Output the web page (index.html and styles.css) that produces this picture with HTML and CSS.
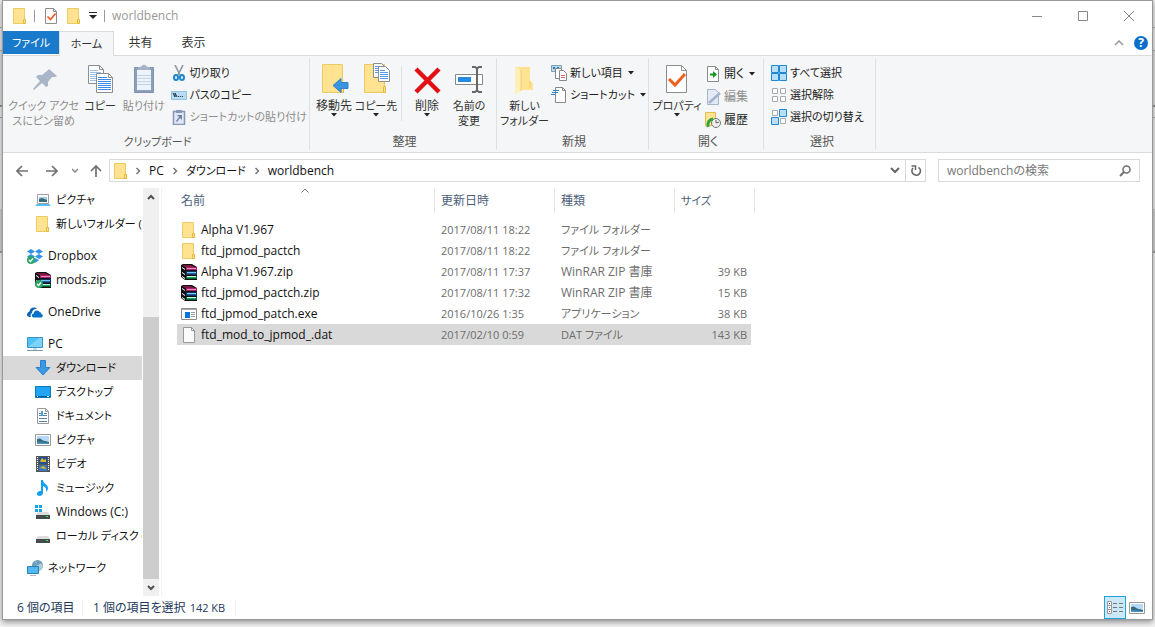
FILE: index.html
```html
<!DOCTYPE html>
<html lang="ja">
<head>
<meta charset="utf-8">
<title>worldbench</title>
<link rel="stylesheet" href="styles.css">
</head>
<body>
<svg class="defs" aria-hidden="true">
  <symbol id="i-folder" viewBox="0 0 16 16"><path d="M1.500.5h11v11h1v4h-12z" fill="#ffe391" stroke="#eecb60"/><path d="M11.500 15.500v-4h2v4z" fill="#ffe391" stroke="#e5b93c"/></symbol>
  <symbol id="i-checkdoc" viewBox="0 0 16 16"><path d="M2.500.5h8l3 3v12h-11z" fill="#fff" stroke="#8b8b8b"/><path d="M10.500.5v3h3" fill="none" stroke="#8b8b8b"/><path d="M4.500 8.500l3 3 5-6" fill="none" stroke="#ee5a24" stroke-width="1.700"/></symbol>
  <symbol id="i-file" viewBox="0 0 16 16"><path d="M2.500.5h8l3 3v12h-11z" fill="#fafafa" stroke="#999"/><path d="M10.500.5v3h3" fill="none" stroke="#999"/></symbol>
  <symbol id="i-rar" viewBox="0 0 16 16"><path d="M0 1l2-1h9l5 3v13H4l-4-3z" fill="#111"/><path d="M1 1h9l4 2H4z" fill="#7d1745"/><path d="M5 3h11v3H5z" fill="#a92268"/><path d="M6 4h9v1H6z" fill="#f08cc4"/><path d="M1 3l3 2v1L1 4zM1 8l3 2v1L1 9zM1 12l3 2v1l-3-2z" fill="#fff"/><path d="M5 7h11v4H5z" fill="#12335f"/><path d="M6 8h9v1H6z" fill="#73c9f3"/><path d="M6 9h9v1H6z" fill="#2062ac"/><path d="M5 12h11v3H5z" fill="#075e38"/><path d="M6 12h9v1H6z" fill="#c9ffe0"/><path d="M6 13h9v1H6z" fill="#19a760"/></symbol>
  <symbol id="i-exe" viewBox="0 0 16 16"><path d="M.5 2.500h15v11H.5z" fill="#fff" stroke="#8c8c8c"/><path d="M1 3h14v1H1z" fill="#aaa"/><path d="M4 6h5v6H4z" fill="#0078d7"/><path d="M10 6.500h4M10 8.500h4M10 10.500h4" stroke="#999"/></symbol>
  <symbol id="i-pic" viewBox="0 0 16 16"><path d="M.5 2.500h15v11H.5z" fill="#fff" stroke="#999"/><path d="M2 4h12v8H2z" fill="#b5daf8"/><path d="M2 7l3-.5 3 2 6 1.500v1H2z" fill="#376b7a"/><path d="M2 10l12 1v1H2z" fill="#4c92c6"/></symbol>
  <symbol id="i-piclink" viewBox="0 0 16 16"><path d="M2.500 2.500h11v9h-11z" fill="#fff" stroke="#a0a0a0"/><path d="M4 5h8v5H4z" fill="#a3cdec"/><path d="M4 7l3-1 5 2v2H4z" fill="#376b7a"/><path d="M2 12h12l2 2H0z" fill="#55bff4"/></symbol>
  <symbol id="i-ok" viewBox="0 0 16 16"><circle cx="4" cy="12" r="4" fill="#2ea568"/><path d="M2 12l1.500 1.500 2.500-3" fill="none" stroke="#fff" stroke-width="1.300"/></symbol>
  <symbol id="i-dropbox" viewBox="0 0 16 16"><path d="M4 1l4 2.500L4 6 0 3.500zM12 1l4 2.500L12 6 8 3.500zM4 6l4 2.500L4 11 0 8.500zM12 6l4 2.500-4 2.500-4-2.500zM8 10l4 2-4 3-4-3z" fill="#3193e5"/><use href="#i-ok"/></symbol>
  <symbol id="i-cloud" viewBox="0 0 16 16"><path d="M0 11c0-2 1-3 2.500-3.500C3 4 7 2 10 5 7 4.500 5 6.500 5 9c-2 1-1.500 3-1 4C2 13 0 12.500 0 11z" fill="#0d63b5"/><path d="M6.500 13.500c-2.500-.5-2-4 .2-4 0-3.500 5-4 6-1.200 1.300 0 1.700 1 1.500 1.700 2.300.5 2 3.500 0 3.500z" fill="#0872c9"/></symbol>
  <symbol id="i-pc" viewBox="0 0 16 16"><path d="M.5 1.500h15v10H.5z" fill="#4fc1f6" stroke="#3a94c7"/><path d="M1 11L12 2h3v9z" fill="#7bd3fa"/><path d="M6 12h4v2H6z" fill="#bde1f0"/><path d="M0 14h16v1H0z" fill="#7b99aa"/></symbol>
  <symbol id="i-down" viewBox="0 0 16 16"><path d="M5.500.5h5v7h4.500L8 15 1 7.500h4.500z" fill="#3d98e4" stroke="#297fca"/></symbol>
  <symbol id="i-desktop" viewBox="0 0 16 16"><path d="M.5 2.500h15v11H.5z" fill="#20a4f3" stroke="#087ac2"/><path d="M1 12h14v1H1z" fill="#0b5b94"/><path d="M2 12h1v1H2zM12 12h2v1h-2z" fill="#fff"/></symbol>
  <symbol id="i-doc" viewBox="0 0 16 16"><path d="M2.500.5h8l3 3v12h-11z" fill="#fff" stroke="#999"/><path d="M10.500.5v3h3" fill="none" stroke="#999"/><path d="M4 5.500h2M4 7.500h3M4 10.500h8M4 13.500h8M9 5.500h3M8 7.500h4" stroke="#55829e"/><path d="M6 3h2v5H6z" fill="#4ba3de"/></symbol>
  <symbol id="i-video" viewBox="0 0 16 16"><path d="M1 0h14v16H1z" fill="#555"/><path d="M4 1h8v7H4z" fill="#235197"/><path d="M4 9h8v6H4z" fill="#3779c1"/><path d="M5 5l2-3 2 2 2-1v3H6zM5 12l3-2 2 1 1 2z" fill="#d9b72d"/><path d="M2.500 1v14M13.500 1v14" stroke="#fff" stroke-dasharray="1 1"/></symbol>
  <symbol id="i-music" viewBox="0 0 16 16"><path d="M6 0h2c0 4 5 4 5 8 0 2-1 3-2 4 1-4-1-5-3-6v7c0 3-5 4-6 1.500C1.500 12 4 10.500 6 11z" fill="#129ff1"/></symbol>
  <symbol id="i-drive" viewBox="0 0 16 16"><path d="M3 8h10l2 3H1z" fill="#ddd"/><path d="M1 11h14v4H1z" fill="#454c50"/><path d="M11 12h2v1h-2z" fill="#37e55c"/></symbol>
  <symbol id="i-windrive" viewBox="0 0 16 16"><use href="#i-drive"/><path d="M0 1h3v3H0zM4 1h3v3H4zM0 5h3v3H0zM4 5h3v3H4z" fill="#12a8ed"/></symbol>
  <symbol id="i-net" viewBox="0 0 16 16"><circle cx="10.500" cy="5.500" r="5.500" fill="#6c9db9"/><path d="M8 1c3 1 0 3 2 4s3-3 5-1-1 6-3 7" fill="#b0cfdd"/><path d="M.5 6.500h11v7H.5z" fill="#54b9f1" stroke="#237fb5"/><path d="M3 15h6v1H3z" fill="#a8bdc9"/></symbol>
  <symbol id="i-bigfolder" viewBox="0 0 32 32"><path d="M4.500 1.500h20v23h1v5h-21z" fill="#ffe391" stroke="#ecca63"/><path d="M23.500 29.500v-6h2v6z" fill="#ffe391" stroke="#e0ba4b"/></symbol>
  <symbol id="i-caret" viewBox="0 0 6 4"><path d="M0 0h6L3 3.500z" fill="#222"/></symbol>
  <symbol id="i-right" viewBox="0 0 6 8"><path d="M1.500 1l3 3-3 3" fill="none" stroke="#777" stroke-width="1.500"/></symbol>
</svg>

<div class="window">
  <header class="titlebar">
    <svg class="ic"><use href="#i-folder"/></svg>
    <span class="bar"></span>
    <button class="plain" aria-label="プロパティ"><svg class="ic"><use href="#i-checkdoc"/></svg></button>
    <button class="plain" aria-label="新しいフォルダー"><svg class="ic"><use href="#i-folder"/></svg></button>
    <button class="plain custom" aria-label="カスタマイズ"><svg width="8" height="8" viewBox="0 0 8 8"><path d="M0 .5h8" stroke="#222"/><path d="M0 3h8L4 7z" fill="#222"/></svg></button>
    <span class="bar"></span>
    <h1>worldbench</h1>
    <div class="winctl">
      <button class="plain" aria-label="最小化"><svg width="12" height="12"><path d="M1 6.500h10" stroke="#888"/></svg></button>
      <button class="plain" aria-label="最大化"><svg width="12" height="12"><path d="M1.500 1.500h9v9h-9z" fill="none" stroke="#888"/></svg></button>
      <button class="plain" aria-label="閉じる"><svg width="12" height="12"><path d="M1 1l10 10M11 1L1 11" stroke="#888"/></svg></button>
    </div>
  </header>

  <div class="tabs">
    <button class="tab file kana">ファイル</button>
    <button class="tab home kana">ホーム</button>
    <button class="tab">共有</button>
    <button class="tab">表示</button>
    <div class="tabtools">
      <button class="plain" aria-label="リボンの最小化"><svg width="10" height="6"><path d="M1 5l4-4 4 4" fill="none" stroke="#999" stroke-width="1.500"/></svg></button>
      <button class="help" aria-label="ヘルプ">?</button>
    </div>
  </div>

  <div class="ribbon">
    <section class="group clipboard">
      <div class="tools">
        <button class="big pin off kana"><svg viewBox="0 0 32 32"><path d="M21 6l8 7-2 1-3 0-4 5 0 4-2 1-4-4-8 7-1-1 7-8-4-4 2-2 4 0 5-4z" fill="#a9b6c8"/></svg>クイック アクセ<br>スにピン留め</button>
        <button class="big copy kana"><svg viewBox="0 0 32 32"><g fill="#fff" stroke="#8d8d8d"><path d="M4.500 2.500h11l4 4v14h-15z"/><path d="M12.500 10.500h12l4 4v15h-16z"/><path d="M15.500 2.500v4h4M24.500 10.500v4h4" fill="none"/></g><path d="M6 7.500h8M6 9.500h11M6 11.500h6M6 13.500h6M6 15.500h6M6 17.500h6" stroke="#9ac0ee"/><path d="M14 14.500h9M14 16.500h13M14 18.500h13M14 20.500h13M14 22.500h13M14 24.500h13M14 26.500h13" stroke="#3d87e8"/></svg>コピー</button>
        <button class="big paste off kana"><svg viewBox="0 0 32 32"><path d="M6.500 4.500h19v25h-19z" fill="#8fa0bd" stroke="#8291b0"/><path d="M9 7h14v20H9z" fill="#edf3fb"/><path d="M9 12.500h14M9 15.500h14M9 18.500h14M9 21.500h14" stroke="#c5d3e9"/><path d="M10 7V4h3c1-3 5-3 6 0h3v3z" fill="#a5b2c8"/></svg>貼り付け</button>
        <div class="small kana">
          <button><svg class="ic" viewBox="0 0 16 16"><path d="M4 0l5 10M12 0L7 10" stroke="#8b969e" stroke-width="1.600"/><g fill="none" stroke="#1c85cd" stroke-width="2"><ellipse cx="5" cy="12.500" rx="2" ry="2.500"/><ellipse cx="11" cy="12.500" rx="2" ry="2.500"/></g></svg>切り取り</button>
          <button><svg class="ic" viewBox="0 0 16 16"><path d="M.5 4.500h15v8H.5z" fill="#b9dcf3" stroke="#91c5e6"/><path d="M2 6l2 4V6l2 4" stroke="#1b3447" fill="none"/><path d="M7 9.500h1M9 9.500h1M11 9.500h1" stroke="#1b3447"/></svg>パスのコピー</button>
          <button class="off"><svg class="ic" viewBox="0 0 16 16"><path d="M2.500 2.500h11v13h-11z" fill="#dfe7f4" stroke="#8797b5" stroke-width="1.500"/><path d="M5 1h6v3H5z" fill="#8797b5"/><path d="M6 6h5v5L9 9l-3 4-1-1 3-4z" fill="#7285a9"/></svg>ショートカットの貼り付け</button>
        </div>
      </div>
      <h2 class="kana">クリップボード</h2>
    </section>

    <section class="group organize">
      <div class="tools">
        <button class="big"><svg viewBox="0 0 32 32"><use href="#i-bigfolder"/><path d="M15 22.500l8-7v4h7v6h-7v4z" fill="#3b94e0" stroke="#2e82c9"/></svg>移動先<svg class="caret"><use href="#i-caret"/></svg></button>
        <button class="big kana"><svg viewBox="0 0 32 32"><use href="#i-bigfolder"/><g fill="#fff" stroke="#8d8d8d"><path d="M13.500.5h8l3 3v11h-11z"/><path d="M18.500 3.500h7l4 4v11h-11z"/></g><path d="M15 3.500h5M15 5.500h3M15 7.500h3M15 9.500h3M20 7.500h5M20 9.500h8M20 11.500h8M20 13.500h8M20 15.500h8" stroke="#589be8"/></svg>コピー先<svg class="caret"><use href="#i-caret"/></svg></button>
        <span class="split"></span>
        <button class="big"><svg viewBox="0 0 32 32"><path d="M5 6l23 23M28 6L5 29" stroke="#e20f15" stroke-width="4.500"/></svg>削除<svg class="caret"><use href="#i-caret"/></svg></button>
        <button class="big kana"><svg viewBox="0 0 32 32"><path d="M2.500 11.500h27v10h-27z" fill="#fff" stroke="#888"/><path d="M5 14h13v5H5z" fill="#268be0"/><path d="M19 4h3l2 1.500L26 4h3M19 29h3l2-1.500 2 1.500h3M24 4v25" fill="none" stroke="#666" stroke-width="2"/></svg>名前の<br>変更</button>
      </div>
      <h2>整理</h2>
    </section>

    <section class="group create">
      <div class="tools">
        <button class="big folder kana"><svg viewBox="0 0 32 32"><path d="M6 4h15v14l3 2v7H6z" fill="#ffe391"/><path d="M6 4l6 3v21l-6 3z" fill="#ffefb8"/><path d="M12 7v21M21 18v7" stroke="#efcd68"/></svg>新しい<br>フォルダー</button>
        <div class="small kana">
          <button><svg class="ic" viewBox="0 0 16 16"><path d="M.5.5h10v6H.5z" fill="#b8dcf1" stroke="#7f9daf"/><path d="M2 3h2M6 3h2" stroke="#287bac" stroke-width="2"/><path d="M4.500 3.500h6v10h-6z" fill="#fff" stroke="#888"/><path d="M8.500 5.500h4l3 3v7h-7z" fill="#fff" stroke="#888"/><path d="M10 10.500h4M10 12.500h4" stroke="#de6b68"/></svg>新しい項目<svg class="caret"><use href="#i-caret"/></svg></button>
          <button><svg class="ic" viewBox="0 0 16 16"><path d="M4.500.5h7l3 3v12h-10z" fill="#fff" stroke="#888"/><path d="M11.500.5v3h3" fill="none" stroke="#888"/><path d="M2 3.500h6M1 5.500h6M0 7.500h4" stroke="#2782c8"/></svg>ショートカット<svg class="caret"><use href="#i-caret"/></svg></button>
        </div>
      </div>
      <h2>新規</h2>
    </section>

    <section class="group open">
      <div class="tools">
        <button class="big prop kana"><svg viewBox="0 0 32 32"><path d="M5.500 2.500h15l5 5v22h-20z" fill="#fff" stroke="#8b8b8b"/><path d="M20.500 2.500v5h5" fill="none" stroke="#8b8b8b"/><path d="M8 16l6 6 10-11" fill="none" stroke="#f0601f" stroke-width="3"/></svg>プロパティ<svg class="caret"><use href="#i-caret"/></svg></button>
        <div class="small">
          <button><svg class="ic" viewBox="0 0 16 16"><path d="M2.500.5h8l3 3v12h-11z" fill="#fff" stroke="#8b8b8b"/><path d="M10.500.5v3h3" fill="none" stroke="#8b8b8b"/><path d="M5 8.500h4" stroke="#10991f" stroke-width="2"/><path d="M8 5l4 3.500L8 12z" fill="#10991f"/></svg>開く<svg class="caret"><use href="#i-caret"/></svg></button>
          <button class="off"><svg class="ic" viewBox="0 0 16 16"><path d="M2.500.5h8l3 3v12h-11z" fill="#e3eaf5" stroke="#a7b5cc"/><path d="M4 14L15 4" stroke="#a3b3cf" stroke-width="2.500"/></svg>編集</button>
          <button><svg class="ic" viewBox="0 0 16 16"><path d="M.5.5h10v13H.5z" fill="#ffe391" stroke="#e4bd50"/><circle cx="11" cy="11" r="4.500" fill="#eee" stroke="#777"/><path d="M11 8v3l3-1" fill="none" stroke="#666"/><path d="M3 15c-1-5 2-8 5-8" fill="none" stroke="#2da53b" stroke-width="3"/></svg>履歴</button>
        </div>
      </div>
      <h2>開く</h2>
    </section>

    <section class="group select">
      <div class="tools">
        <div class="small kana">
          <button><svg class="ic" viewBox="0 0 16 16"><path d="M.5.5h7v7h-7zM8.500.5h7v7h-7zM.5 8.500h7v7h-7zM8.500 8.500h7v7h-7z" fill="#b9dff8" stroke="#1e88d2"/></svg>すべて選択</button>
          <button><svg class="ic" viewBox="0 0 16 16"><path d="M1.500 1.500h5v5h-5zM9.500 1.500h5v5h-5zM1.500 9.500h5v5h-5zM9.500 9.500h5v5h-5z" fill="#fff" stroke="#aaa"/></svg>選択解除</button>
          <button><svg class="ic" viewBox="0 0 16 16"><path d="M1.500 1.500h5v5h-5zM9.500 9.500h5v5h-5z" fill="#fff" stroke="#aaa"/><path d="M8.500.5h7v7h-7zM.5 8.500h7v7h-7z" fill="#b9dff8" stroke="#1e88d2"/></svg>選択の切り替え</button>
        </div>
      </div>
      <h2>選択</h2>
    </section>
  </div>

  <div class="address">
    <button class="plain go" aria-label="戻る"><svg width="12" height="12"><path d="M12 6H1M6 1L1 6l5 5" fill="none" stroke="#707070" stroke-width="1.700"/></svg></button>
    <button class="plain go" aria-label="進む"><svg width="12" height="12"><path d="M0 6h11M6 1l5 5-5 5" fill="none" stroke="#707070" stroke-width="1.700"/></svg></button>
    <button class="plain recent" aria-label="最近表示した場所"><svg width="6" height="5"><path d="M0 1l3 3 3-3" fill="none" stroke="#888" stroke-width="1.500"/></svg></button>
    <button class="plain up" aria-label="上へ"><svg width="12" height="12"><path d="M6 12V1M1 6l5-5 5 5" fill="none" stroke="#707070" stroke-width="1.700"/></svg></button>
    <div class="path">
      <svg class="ic"><use href="#i-folder"/></svg>
      <svg class="chev"><use href="#i-right"/></svg><a href="#pc">PC</a>
      <svg class="chev"><use href="#i-right"/></svg><a class="kana" href="#downloads">ダウンロード</a>
      <svg class="chev"><use href="#i-right"/></svg><a href="#worldbench">worldbench</a>
      <button class="plain drop" aria-label="以前の場所"><svg width="10" height="7"><path d="M1 1l4 4 4-4" fill="none" stroke="#666" stroke-width="2"/></svg></button>
      <button class="plain refresh" aria-label="最新の情報に更新"><svg width="12" height="12"><path d="M8.500 2.300A4.300 4.300 0 1 1 3 3" fill="none" stroke="#666" stroke-width="1.600"/><path d="M1.500 1h4v4" fill="none" stroke="#666" stroke-width="1.500"/></svg></button>
    </div>
    <label class="search">
      <input type="text" placeholder="worldbenchの検索" aria-label="worldbenchの検索">
      <svg width="12" height="12"><circle cx="7.500" cy="4.500" r="3.500" fill="none" stroke="#707070" stroke-width="1.600"/><path d="M5 7l-4 4" stroke="#707070" stroke-width="2"/></svg>
    </label>
  </div>

  <div class="body">
    <nav class="tree">
      <ul>
        <li class="sub kana"><a href="#quick-pictures"><svg class="ic"><use href="#i-piclink"/></svg>ピクチャ</a></li>
        <li class="sub kana"><a href="#new-folder"><svg class="ic"><use href="#i-folder"/></svg>新しいフォルダー (2)</a></li>
      </ul>
      <ul>
        <li><a href="#dropbox"><svg class="ic"><use href="#i-dropbox"/></svg>Dropbox</a></li>
        <li class="sub"><a href="#mods"><svg class="ic" viewBox="0 0 16 16"><use href="#i-rar"/><use href="#i-ok"/></svg>mods.zip</a></li>
      </ul>
      <ul>
        <li><a href="#onedrive"><svg class="ic"><use href="#i-cloud"/></svg>OneDrive</a></li>
      </ul>
      <ul>
        <li><a href="#pc"><svg class="ic"><use href="#i-pc"/></svg>PC</a></li>
        <li class="sub kana current"><a href="#downloads"><svg class="ic"><use href="#i-down"/></svg>ダウンロード</a></li>
        <li class="sub kana"><a href="#desktop"><svg class="ic"><use href="#i-desktop"/></svg>デスクトップ</a></li>
        <li class="sub kana"><a href="#documents"><svg class="ic"><use href="#i-doc"/></svg>ドキュメント</a></li>
        <li class="sub kana"><a href="#pictures"><svg class="ic"><use href="#i-pic"/></svg>ピクチャ</a></li>
        <li class="sub kana"><a href="#videos"><svg class="ic"><use href="#i-video"/></svg>ビデオ</a></li>
        <li class="sub kana"><a href="#music"><svg class="ic"><use href="#i-music"/></svg>ミュージック</a></li>
        <li class="sub"><a href="#drive-c"><svg class="ic"><use href="#i-windrive"/></svg>Windows (C:)</a></li>
        <li class="sub kana"><a href="#drive-d"><svg class="ic"><use href="#i-drive"/></svg>ローカル ディスク (D:)</a></li>
      </ul>
      <ul>
        <li class="kana"><a href="#network"><svg class="ic"><use href="#i-net"/></svg>ネットワーク</a></li>
      </ul>
    </nav>
    <div class="scroll">
      <button class="plain" aria-label="上へスクロール"><svg width="8" height="6"><path d="M1 5l3-3 3 3" fill="none" stroke="#505050" stroke-width="2"/></svg></button>
      <div class="track"><div class="thumb"></div></div>
      <button class="plain" aria-label="下へスクロール"><svg width="8" height="6"><path d="M1 1l3 3 3-3" fill="none" stroke="#505050" stroke-width="2"/></svg></button>
    </div>
    <main class="files">
      <table>
        <thead>
          <tr><th class="name">名前<svg class="sort" width="8" height="5"><path d="M.5 4.500L4 1l3.500 3.500" fill="none" stroke="#777"/></svg></th><th class="mid">更新日時</th><th class="mid">種類</th><th class="size kana">サイズ</th></tr>
        </thead>
        <tbody>
          <tr><td><span class="cell"><svg class="ic"><use href="#i-folder"/></svg>Alpha V1.967</span></td><td class="date">2017/08/11 18:22</td><td class="kana">ファイル フォルダー</td><td></td></tr>
          <tr><td><span class="cell"><svg class="ic"><use href="#i-folder"/></svg>ftd_jpmod_pactch</span></td><td class="date">2017/08/11 18:22</td><td class="kana">ファイル フォルダー</td><td></td></tr>
          <tr><td><span class="cell"><svg class="ic"><use href="#i-rar"/></svg>Alpha V1.967.zip</span></td><td class="date">2017/08/11 17:37</td><td>WinRAR ZIP 書庫</td><td class="bytes">39 KB</td></tr>
          <tr><td><span class="cell"><svg class="ic"><use href="#i-rar"/></svg>ftd_jpmod_pactch.zip</span></td><td class="date">2017/08/11 17:32</td><td>WinRAR ZIP 書庫</td><td class="bytes">15 KB</td></tr>
          <tr><td><span class="cell"><svg class="ic"><use href="#i-exe"/></svg>ftd_jpmod_patch.exe</span></td><td class="date">2016/10/26 1:35</td><td class="kana">アプリケーション</td><td class="bytes">38 KB</td></tr>
          <tr class="selected"><td><span class="cell"><svg class="ic"><use href="#i-file"/></svg>ftd_mod_to_jpmod_.dat</span></td><td class="date">2017/02/10 0:59</td><td class="kana">DAT ファイル</td><td class="bytes">143 KB</td></tr>
        </tbody>
      </table>
    </main>
  </div>

  <footer class="status">
    <span class="count">6 個の項目</span>
    <span class="picked"><span>1 個の項目を選択</span><span class="bytes">142 KB</span></span>
    <div class="views">
      <button class="plain on" aria-label="詳細"><svg width="18" height="14"><path d="M1.500.5h4v12h-4zM1 4.500h5M1 8.500h5" fill="#fff" stroke="#999"/><path d="M3 2.500h1" stroke="#333"/><path d="M3 6.500h1" stroke="#2a7bd0"/><path d="M3 10.500h1" stroke="#c22"/><path d="M7 2.500h4M13 2.500h4M7 6.500h4M13 6.500h4M7 10.500h4M13 10.500h4" stroke="#777"/></svg></button>
      <button class="plain" aria-label="大アイコン"><svg class="ic"><use href="#i-pic"/></svg></button>
    </div>
  </footer>
</div>
</body>
</html>
```

FILE: styles.css
```css
* { box-sizing: border-box; }

body {
  margin: 0;
  min-height: 100vh;
  display: flex;
  padding: 0 2px 7px;
  background: linear-gradient(#eee 0 27px, #999 27px 28px, #eee 28px 50px, #999 50px 51px, #ddd 51px 105px, #777 105px 107px, #eee 107px 117px, #999 117px 118px, #eee 118px 209px, #ccc 209px 251px, #888 251px 253px, #f4f4f4 253px);
  overflow: hidden;
  color: #111;
  font: 12px/16px "Open Sans", "Noto Sans CJK JP", sans-serif;
  font-feature-settings: "palt";
}

button, input { font: inherit; font-feature-settings: inherit; color: inherit; }
button { padding: 0; border: 0; background: none; white-space: nowrap; }
a { color: inherit; text-decoration: none; }
h1, h2 { margin: 0; font-size: 12px; font-weight: 400; }
ul { margin: 0; padding: 0; list-style: none; }
svg { display: block; flex: none; }

.defs { position: absolute; width: 0; height: 0; }
.ic { width: 16px; height: 16px; }
.caret { width: 6px; height: 4px; }
.plain { display: flex; align-items: center; justify-content: center; }
.kana, .date, .bytes { font-size: 11px; }

.window {
  flex: 1;
  min-width: 0;
  display: flex;
  flex-direction: column;
  background: #fff;
  border: 1px solid #999;
  box-shadow: 0 2px 6px #888;
}

.titlebar { display: flex; align-items: center; height: 30px; padding-left: 9px; color: #999; }
.titlebar .bar { width: 1px; height: 12px; background: #999; margin: 0 8px 0 6px; }
.titlebar .plain + .plain { margin-left: 7px; }
.titlebar .custom + .bar { margin: 0 7px; }
.winctl { display: flex; align-self: stretch; margin-left: auto; }
.winctl .plain { width: 46px; }
.titlebar .winctl .plain { margin: 0; }

.tabs { display: flex; height: 25px; border-bottom: 1px solid #dadbdc; }
.tab { width: 53px; color: #333; }
.tab.file { width: 56px; background: #1979ca; color: #fff; height: 23px; }
.tab.home {
  width: 55px;
  height: 25px;
  background: #f5f6f7;
  border: solid #dadbdc;
  border-width: 1px 1px 0;
}
.tabtools { display: flex; align-items: center; gap: 10px; margin-left: auto; padding-right: 4px; }
.help { width: 14px; height: 14px; border-radius: 50%; background: #0a6fca; color: #fff; font-weight: 700; line-height: 14px; }

.ribbon { display: flex; background: #f5f6f7; border-bottom: 1px solid #dadbdc; padding: 2px 0; height: 97px; }
.group { display: flex; flex-direction: column; flex: none; border-right: 1px solid #dfe0e2; padding: 4px 0 0 3px; }
.clipboard { width: 307px; }
.organize { width: 187px; }
.create { width: 152px; }
.open { width: 115px; padding-left: 4px; }
.select { width: 112px; padding-left: 5px; }
.group h2 { text-align: center; margin-top: auto; color: #555; }
.tools { display: flex; height: 72px; }
.big { display: flex; flex-direction: column; align-items: center; width: 42px; line-height: 15px; color: #333; padding-top: 1px; }
.big svg { width: 32px; height: 32px; margin-bottom: 3px; }
.big .caret { width: 6px; height: 4px; margin: 0; }
.big.pin { width: 76px; }
.big.copy { width: 38px; }
.big.paste { width: 50px; }
.big.folder { width: 50px; }
.big.prop { width: 48px; }
.small button { display: flex; align-items: center; gap: 3px; height: 22px; padding: 0 2px; color: #222; }
.small .caret { margin-left: 2px; }
.open .small button { height: 23px; padding-left: 4px; }
.big.off, .small .off { color: #8d8d8d; }
.split { width: 1px; height: 55px; background: #dfe0e2; margin: 4px 4px 0; }

.address { display: flex; align-items: center; height: 35px; padding: 0 12px 0 8px; }
.go { width: 30px; height: 22px; padding-right: 8px; }
.recent { width: 8px; }
.up { width: 30px; height: 22px; padding-left: 4px; }
.path { flex: 1; display: flex; align-items: center; height: 23px; border: 1px solid #d9d9d9; padding-left: 3px; }
.path .ic { margin-right: 6px; }
.chev { width: 6px; height: 8px; margin-right: 8px; }
.path a { margin-right: 8px; }
.drop { margin-left: auto; width: 20px; }
.refresh { width: 20px; align-self: stretch; border-left: 1px solid #d9d9d9; }
.search { display: flex; align-items: center; width: 202px; height: 23px; margin-left: 12px; padding: 0 8px; border: 1px solid #d9d9d9; }
.search input { flex: 1; min-width: 0; border: 0; padding: 0; outline: 0; background: none; }
.search input::placeholder { color: #777; opacity: 1; }

.body { flex: 1; display: flex; min-height: 408px; }
.tree { width: 139px; overflow: hidden; white-space: nowrap; }
.tree ul + ul { margin-top: 8px; }
.tree a { display: flex; align-items: center; gap: 5px; height: 24px; padding-left: 24px; }
.tree .sub a { padding-left: 32px; }
.tree .current { background: #d9d9d9; }
.scroll { display: flex; flex-direction: column; width: 16px; margin-left: 1px; background: #f0f0f0; }
.scroll .plain { height: 17px; }
.track { flex: 1; display: flex; flex-direction: column; justify-content: flex-end; }
.thumb { height: 70%; background: #cdcdcd; }

.files { flex: 1; margin-left: 2px; border-left: 1px solid #f2f2f2; padding-left: 15px; }
table { border-collapse: separate; border-spacing: 0; table-layout: fixed; width: 578px; }
th { position: relative; height: 25px; padding: 0 0 0 6px; text-align: left; font-weight: 400; color: #4c607a; border-right: 1px solid #e5e5e5; }
.name { width: 258px; padding-left: 4px; }
.mid { width: 120px; }
.sort { position: absolute; left: 124px; top: 0; }
thead::after { content: ""; display: block; height: 6px; }
td { height: 21px; padding: 0 0 0 6px; color: #6d6d6d; background-clip: padding-box; white-space: nowrap; }
td:first-child { padding-left: 4px; color: #111; }
td:last-child { text-align: right; padding-right: 4px; border-right: 4px solid transparent; }
.selected td { background-color: #d9d9d9; }
.cell { display: flex; align-items: center; gap: 4px; }

.status { display: flex; align-items: center; height: 23px; padding-left: 14px; color: #1e395b; }
.count { width: 66px; border-right: 1px solid #eee; }
.picked { display: flex; gap: 4px; padding: 0 10px; border-right: 1px solid #eee; }
.views { display: flex; align-self: stretch; gap: 3px; margin-left: auto; padding-right: 7px; }
.views .on { width: 22px; background: #cce8f6; border: 1px solid #26a0da; }
```
